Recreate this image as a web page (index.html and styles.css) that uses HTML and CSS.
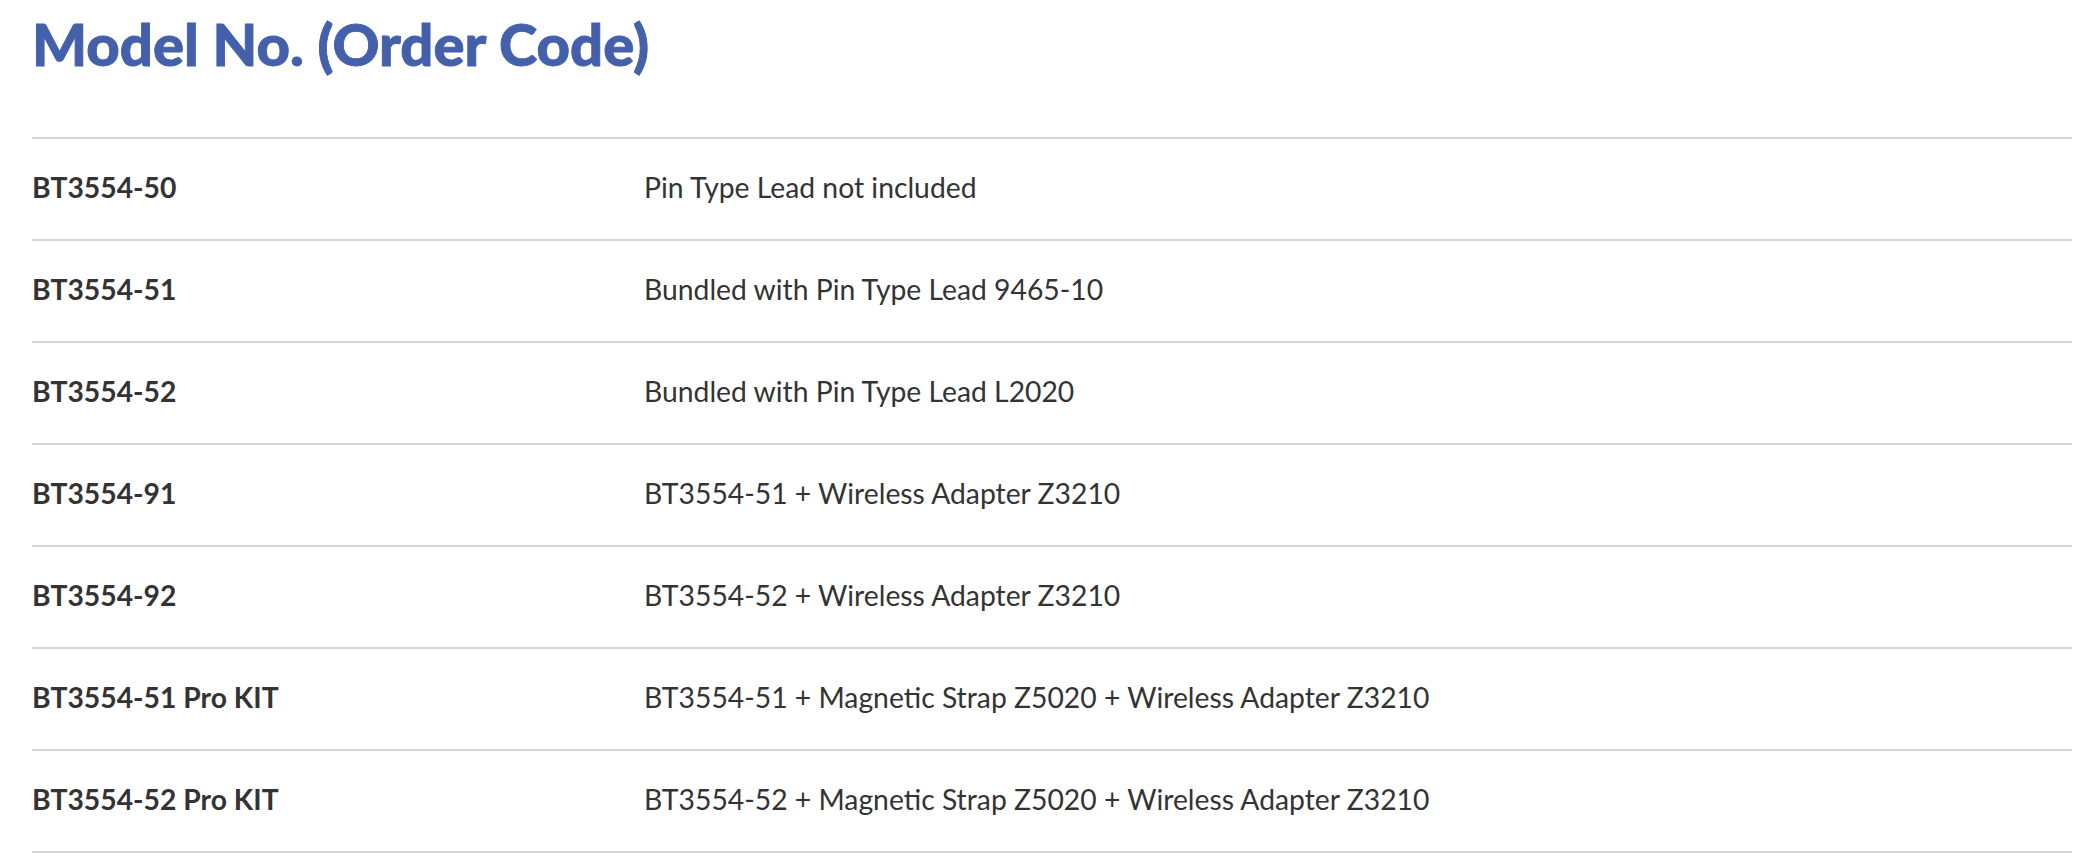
FILE: index.html
```html
<!DOCTYPE html>
<html lang="en">
<head>
<meta charset="utf-8">
<title>Model No. (Order Code)</title>
<link rel="stylesheet" href="styles.css">
</head>
<body>
<section class="spec">
  <h1 class="spec-title">Model No. (Order Code)</h1>
  <table class="spec-table">
    <tbody>
      <tr><th>BT3554-50</th><td>Pin Type Lead not included</td></tr>
      <tr><th>BT3554-51</th><td>Bundled with Pin Type Lead 9465-10</td></tr>
      <tr><th>BT3554-52</th><td>Bundled with Pin Type Lead L2020</td></tr>
      <tr><th>BT3554-91</th><td>BT3554-51 + Wireless Adapter Z3210</td></tr>
      <tr><th>BT3554-92</th><td>BT3554-52 + Wireless Adapter Z3210</td></tr>
      <tr><th>BT3554-51 Pro KIT</th><td>BT3554-51 + Magnetic Strap Z5020 + Wireless Adapter Z3210</td></tr>
      <tr><th>BT3554-52 Pro KIT</th><td>BT3554-52 + Magnetic Strap Z5020 + Wireless Adapter Z3210</td></tr>
    </tbody>
  </table>
</section>
</body>
</html>
```
FILE: styles.css
```css
html, body {
  margin: 0;
  padding: 0;
  background: #ffffff;
}
body {
  font-family: Lato, "Open Sans", sans-serif;
  color: #333333;
}
.spec {
  padding: 0 16px 0 32px;
}
.spec-title {
  margin: 0;
  padding-top: 9px;
  font-size: 58px;
  line-height: 70px;
  font-weight: 900;
  color: #4460ab;
  -webkit-text-stroke: 0.9px #4460ab;
  height: 128px;
}
.spec-table {
  width: 100%;
  border-collapse: collapse;
  border-top: 2px solid #d6d6d6;
}
.spec-table tr {
  border-bottom: 2px solid #d6d6d6;
}
.spec-table th,
.spec-table td {
  height: 96px;
  padding: 0 0 4px;
  text-align: left;
  vertical-align: middle;
  font-size: 28.3px;
}
.spec-table th {
  width: 30%;
  font-weight: 700;
}
.spec-table td {
  font-weight: 400;
}
```
